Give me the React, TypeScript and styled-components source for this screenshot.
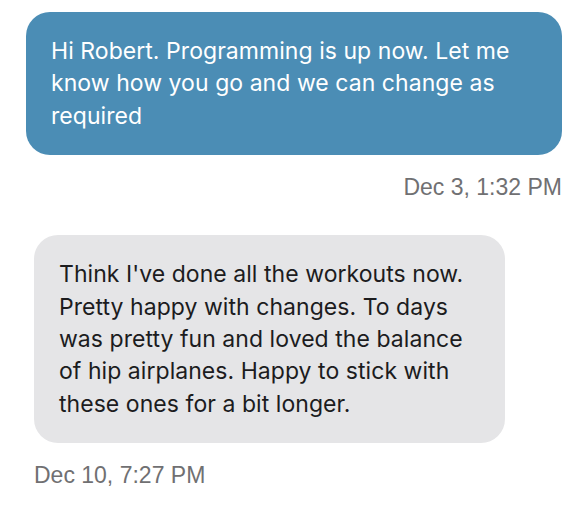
import styled, { createGlobalStyle } from 'styled-components'

const GlobalStyle = createGlobalStyle`
  html, body {
    margin: 0;
    padding: 0;
    background: #ffffff;
  }
  body {
    font-family: 'Inter', 'Liberation Sans', sans-serif;
  }
`

type Side = 'out' | 'in'

interface Message {
  id: number
  side: Side
  lines: string[]
  time: string
}

const messages: Message[] = [
  {
    id: 1,
    side: 'out',
    lines: [
      'Hi Robert. Programming is up now. Let me',
      'know how you go and we can change as',
      'required',
    ],
    time: 'Dec 3, 1:32 PM',
  },
  {
    id: 2,
    side: 'in',
    lines: [
      "Think I've done all the workouts now.",
      'Pretty happy with changes. To days',
      'was pretty fun and loved the balance',
      'of hip airplanes. Happy to stick with',
      'these ones for a bit longer.',
    ],
    time: 'Dec 10, 7:27 PM',
  },
]

const Thread = styled.div`
  display: flex;
  flex-direction: column;
  gap: 36px;
  padding-top: 12px;
  width: 580px;
`

const Group = styled.div<{ $side: Side }>`
  display: flex;
  flex-direction: column;
  align-items: ${(p) => (p.$side === 'out' ? 'flex-end' : 'flex-start')};
  padding: ${(p) => (p.$side === 'out' ? '0 18px 0 26px' : '0 0 0 34px')};
`

const Bubble = styled.div<{ $side: Side }>`
  box-sizing: border-box;
  width: ${(p) => (p.$side === 'out' ? '100%' : '471px')};
  padding: 23px 24px 23px 25px;
  border-radius: 24px;
  background: ${(p) => (p.$side === 'out' ? '#4b8db5' : '#e5e5e7')};
  color: ${(p) => (p.$side === 'out' ? '#ffffff' : '#1c1c1e')};
  font-size: 23px;
  line-height: 32.4px;
  letter-spacing: 0.05px;
`

const Line = styled.span`
  display: block;
  white-space: nowrap;
`

const Timestamp = styled.div`
  margin-top: 20px;
  font-family: 'Liberation Sans', Arial, sans-serif;
  font-size: 23px;
  line-height: 24px;
  color: #707072;
`

export default function App() {
  return (
    <>
      <GlobalStyle />
      <Thread>
        {messages.map((m) => (
          <Group key={m.id} $side={m.side}>
            <Bubble $side={m.side}>
              {m.lines.map((l, i) => (
                <Line key={i}>{l}</Line>
              ))}
            </Bubble>
            <Timestamp>{m.time}</Timestamp>
          </Group>
        ))}
      </Thread>
    </>
  )
}
